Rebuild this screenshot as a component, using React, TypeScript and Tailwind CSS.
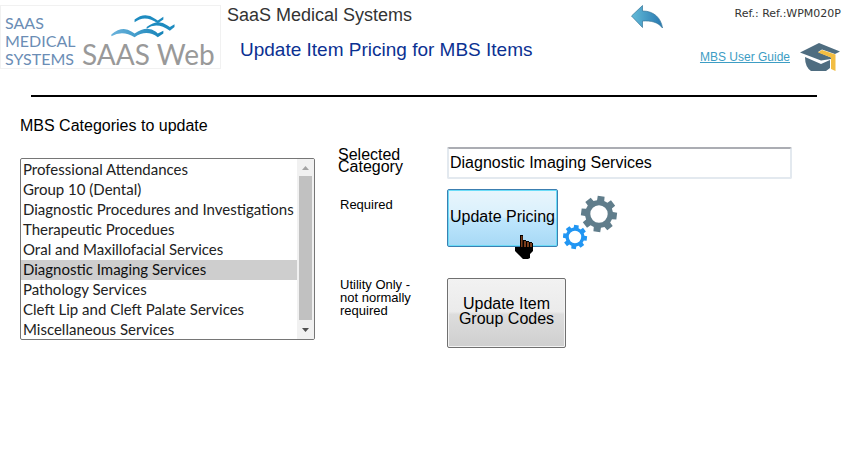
import React from "react";

const categories = [
  "Professional Attendances",
  "Group 10 (Dental)",
  "Diagnostic Procedures and Investigations",
  "Therapeutic Procedues",
  "Oral and Maxillofacial Services",
  "Diagnostic Imaging Services",
  "Pathology Services",
  "Cleft Lip and Cleft Palate Services",
  "Miscellaneous Services",
];

function gearPath(cx: number, cy: number, outer: number, root: number, hole: number, turn: number) {
  const teeth = 8;
  const points: string[] = [];
  for (let i = 0; i < teeth; i++) {
    const a = ((i * 360) / teeth + turn) * (Math.PI / 180);
    const corners: [number, number][] = [
      [root, -0.26],
      [outer, -0.19],
      [outer, 0.19],
      [root, 0.26],
    ];
    for (const [r, d] of corners) {
      points.push(`${(cx + r * Math.cos(a + d)).toFixed(2)} ${(cy + r * Math.sin(a + d)).toFixed(2)}`);
    }
  }
  return `M${points.join("L")}ZM${cx - hole} ${cy}a${hole} ${hole} 0 1 0 ${hole * 2} 0a${hole} ${hole} 0 1 0 ${-hole * 2} 0Z`;
}

function Logo() {
  return (
    <div className="flex h-16 w-[221px] shrink-0 border border-[#f1f1f1] pl-1 font-['Lato',sans-serif]">
      <div className="w-[77px] pt-2 text-base leading-[18px] text-[#6b8db5]">
        SAAS
        <br />
        MEDICAL
        <br />
        SYSTEMS
      </div>
      <div className="flex flex-col whitespace-nowrap">
        <svg className="mt-2 ml-6 h-7 w-[72px]" viewBox="0 0 72 28" fill="#1d8bc0">
          <defs>
            <linearGradient id="gull" x1="0" x2="1">
              <stop offset="0" stopColor="#6bb3dc" />
              <stop offset="1" stopColor="#1583b8" />
            </linearGradient>
          </defs>
          <path d="M28 9V6Q39 -3 50 5L53 7L59 3V6L53 10Q39 0 28 9Z" />
          <path d="M41 16V14Q53 5 63 12L66 14L71 11V14L66 18Q52 8 41 16Z" />
          <path d="M3 24V22Q15 12 25 19L28 21Q41 12 51 19L53 21L59 18V21L53 25Q41 16 28 25Q15 17 3 24Z" fill="url(#gull)" />
        </svg>
        <div className="text-[28px] leading-7 text-[#999999]">SAAS Web</div>
      </div>
    </div>
  );
}

function BackArrow() {
  return (
    <svg className="h-6 w-8" viewBox="0 0 32 24">
      <defs>
        <linearGradient id="back" x1="0" x2="1">
          <stop offset="0" stopColor="#63bbd8" />
          <stop offset="1" stopColor="#2878b0" />
        </linearGradient>
      </defs>
      <path d="M.5 11L11.500.5V6C23 6 30 13 31.500 23C27 17 20 15.500 11.500 16V22.500Z" fill="url(#back)" stroke="#35759a" strokeWidth=".7" />
    </svg>
  );
}

function GraduationCap() {
  return (
    <svg className="h-7 w-10" viewBox="0 0 40 28">
      <path d="M0 9.500L19 0L40 8.500L35 11L22 6.500L18 9L31 14.500V16L21 17.500Z" fill="#4f6d80" />
      <path d="M5 14L21 21L30 17V25L26 28H11Q5 24 5 14Z" fill="#4f6d80" />
      <path d="M22 7L35.500 11.500V28L31 26V14.500L18 9.500Z" fill="#f2bd42" />
    </svg>
  );
}

function Gears() {
  return (
    <svg className="h-[56px] w-[56px]" viewBox="0 0 56 56" fillRule="evenodd">
      <path d={gearPath(36, 19, 18.2, 14, 8.7, 7)} fill="#607d8b" />
      <path d={gearPath(12, 42, 12.2, 9.5, 6.2, 7)} fill="#2196f3" />
    </svg>
  );
}

function HandPointer() {
  return (
    <svg className="pointer-events-none absolute top-[45px] left-[67px] h-[25px] w-5" viewBox="0 0 20 25">
      <path d="M6 1H9V6H12V7H15V8H18V9H19V17L16 20V24L14 25H9L6 22L1 17V13H6Z" fill="#000" />
      <path d="M7 2H8.500V13H7ZM10 7H12V13H10ZM13 8H15V13H13ZM16 9H18V13H16Z" fill="#7a3d1c" />
    </svg>
  );
}

function CategoryList() {
  return (
    <div className="flex h-[182px] w-[295px] overflow-hidden rounded-xs border border-[#767676] bg-white">
      <select
        id="categories"
        size={9}
        defaultValue="Diagnostic Imaging Services"
        className="h-full min-w-0 flex-1 appearance-none overflow-hidden pt-px font-['Lato',sans-serif] text-[15px] text-[#222] outline-none"
      >
        {categories.map((name) => (
          <option key={name} className="h-5 px-0.5 py-0 leading-5 checked:bg-[#cecece]">
            {name}
          </option>
        ))}
      </select>
      <div className="flex w-[17px] flex-col items-center bg-[#f1f1f1]" aria-hidden="true">
        <svg className="h-[17px] w-[17px] shrink-0" viewBox="0 0 17 17">
          <path d="M5 11L8.500 7L12 11Z" fill="#a3a3a3" />
        </svg>
        <div className="w-[13px] flex-1 bg-[#c1c1c1]" />
        <svg className="h-[19px] w-[17px] shrink-0" viewBox="0 0 17 19">
          <path d="M5 8L8.500 12L12 8Z" fill="#505050" />
        </svg>
      </div>
    </div>
  );
}

export default function App() {
  return (
    <div className="bg-white font-['Liberation_Sans',Arial,sans-serif] text-black">
      <header className="flex items-start pt-[5px]">
        <Logo />
        <div className="flex-1 pl-[6px] whitespace-nowrap">
          <div className="text-lg leading-5 text-[#333]">SaaS Medical Systems</div>
          <h1 className="mt-[11px] pl-[13px] text-[19px] leading-7 text-[#0b3192]">Update Item Pricing for MBS Items</h1>
        </div>
        <button type="button" aria-label="Back" className="mr-[37px]">
          <BackArrow />
        </button>
        <div className="flex flex-col items-end pr-[13px]">
          <div className="font-['DejaVu_Sans',Verdana,sans-serif] text-[11px] leading-[18px] text-[#333]">Ref.: Ref.:WPM020P</div>
          <div className="mt-5 flex items-center gap-[10px] pr-px">
            <a href="#guide" className="text-xs text-[#3d9dc4] underline">
              MBS User Guide
            </a>
            <GraduationCap />
          </div>
        </div>
      </header>
      <hr className="mt-6 mr-[37px] ml-[31px] border-t-2 border-black" />
      <main className="flex items-start pt-[18px] pl-5">
        <section className="w-[318px] shrink-0">
          <label htmlFor="categories" className="mb-[21px] block leading-[22px]">
            MBS Categories to update
          </label>
          <CategoryList />
        </section>
        <section className="grid flex-1 grid-cols-[109px_1fr] pt-8">
          <label htmlFor="selected" className="h-[42px] pt-0.5 leading-3">
            Selected
            <br />
            Category
          </label>
          <input
            id="selected"
            type="text"
            defaultValue="Diagnostic Imaging Services"
            className="h-8 w-[345px] rounded-xs border-2 border-[#e3e9ef] border-t-[#abadb3] px-px outline-none"
          />
          <div className="h-[89px] pt-2 pl-0.5 text-[13px] leading-4">Required</div>
          <div className="flex items-start gap-[5px]">
            <div className="relative">
              <button
                type="button"
                className="h-[58px] w-[111px] rounded-xs border border-[#3c7fb1] bg-[linear-gradient(#e8f5fc_0%,#d9f0fc_48%,#bee6fd_52%,#a7d9f5_100%)] pb-0.5 whitespace-nowrap inset-ring inset-ring-[#6bdcf8]"
              >
                Update Pricing
              </button>
              <HandPointer />
            </div>
            <div className="pt-1.5">
              <Gears />
            </div>
          </div>
          <div className="pl-0.5 text-[13px] leading-[13px]">
            Utility Only -<br />
            not normally
            <br />
            required
          </div>
          <button
            type="button"
            className="h-[70px] w-[119px] rounded-xs border border-[#707070] bg-[linear-gradient(#f2f2f2_0%,#ebebeb_48%,#dddddd_52%,#cfcfcf_100%)] pb-1 leading-[15px] inset-ring inset-ring-[#f3f3f3]"
          >
            Update Item
            <br />
            Group Codes
          </button>
        </section>
      </main>
    </div>
  );
}
